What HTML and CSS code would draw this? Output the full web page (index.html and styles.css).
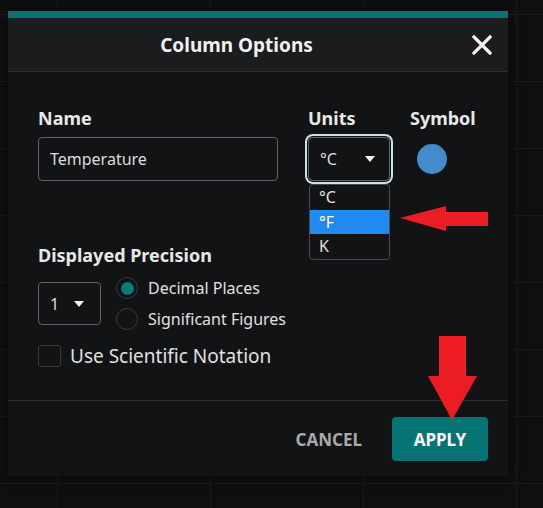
FILE: index.html
```html
<!DOCTYPE html>
<html>
<head>
<meta charset="utf-8">
<link rel="stylesheet" href="styles.css">
</head>
<body>
<div class="dialog">
  <div class="header">
    <div class="title">Column Options</div>
    <svg class="close" width="20" height="20" viewBox="0 0 20 20"><path d="M2 2 L18 18 M18 2 L2 18" stroke="#f2f2f2" stroke-width="3.2" stroke-linecap="square"/></svg>
  </div>
  <div class="body">
    <div class="row1">
      <div class="col name-col">
        <div class="label">Name</div>
        <div class="input">Temperature</div>
      </div>
      <div class="col units-col">
        <div class="label">Units</div>
        <div class="select focused">
          <span>°C</span>
          <span class="caret"></span>
          <div class="menu">
            <div class="opt">°C</div>
            <div class="opt sel">°F</div>
            <div class="opt">K</div>
          </div>
        </div>
      </div>
      <div class="col symbol-col">
        <div class="label">Symbol</div>
        <div class="swatch-wrap"><span class="swatch"></span></div>
      </div>
    </div>
    <div class="label prec-label">Displayed Precision</div>
    <div class="row2">
      <div class="select small"><span>1</span><span class="caret"></span></div>
      <div class="radios">
        <div class="radio-row"><span class="radio on"></span><span>Decimal Places</span></div>
        <div class="radio-row"><span class="radio"></span><span>Significant Figures</span></div>
      </div>
    </div>
    <div class="check-row"><span class="check"></span><span>Use Scientific Notation</span></div>
  </div>
  <div class="footer">
    <span class="cancel">CANCEL</span>
    <span class="apply">APPLY</span>
  </div>
  <svg class="arrow-left" width="90" height="28" viewBox="0 0 90 28"><path d="M0 12 L46 0 L46 6 L88 6 L88 20 L46 20 L46 25 Z" fill="#ec1c24"/></svg>
  <svg class="arrow-down" width="50" height="84" viewBox="0 0 50 84"><path d="M11 0 L38 0 L38 40 L49 40 L24 84 L0 40 L11 40 Z" fill="#ec1c24"/></svg>
</div>
</body>
</html>
```
FILE: styles.css
```css
html, body { margin: 0; padding: 0; }
body {
  width: 543px;
  height: 508px;
  overflow: hidden;
  background-color: #0e0f11;
  background-image:
    linear-gradient(to right, #1a1b1d 1px, transparent 1px),
    linear-gradient(to bottom, #1a1b1d 1px, transparent 1px);
  background-size: 153px 67px;
  background-position: 57px 14px;
  font-family: "Noto Sans", "Open Sans", sans-serif;
  color: #e2e2e2;
}
.dialog {
  position: relative;
  margin: 11px 0 0 8px;
  width: 500px;
  border-top: 7px solid #077272;
  background: #121315;
  box-shadow: 0 0 12px rgba(0,0,0,0.5);
}
.header {
  height: 53px;
  background: #1b1c1e;
  border-bottom: 1px solid #2e2f31;
  display: flex;
  align-items: center;
  gap: 7px;
}
.title {
  flex: 1;
  text-align: center;
  font-weight: 700;
  font-size: 19px;
  color: #f0f0f0;
}
.close { margin-right: 16px; }
.body {
  padding: 34px 30px 0 30px;
  height: 329px;
  box-sizing: border-box;
  border-bottom: 1px solid #2e2f31;
}
.label {
  font-weight: 700;
  font-size: 18px;
  line-height: 24px;
  color: #e8e8e8;
}
.row1 { display: flex; }
.col { display: flex; flex-direction: column; gap: 7px; }
.name-col { width: 240px; margin-right: 30px; }
.units-col { width: 82px; margin-right: 20px; }
.input {
  height: 44px;
  box-sizing: border-box;
  border: 1px solid #606164;
  border-radius: 4px;
  padding-left: 11px;
  display: flex;
  align-items: center;
  font-size: 16px;
  color: #dcdcdc;
}
.select {
  position: relative;
  height: 44px;
  box-sizing: border-box;
  border: 1px solid #606164;
  border-radius: 4px;
  display: flex;
  align-items: center;
  justify-content: space-between;
  padding: 0 14px 0 11px;
  font-size: 16px;
  color: #dcdcdc;
}
.select.focused {
  box-shadow: 0 0 0 1px #141517, 0 0 0 3px #c8e4e4;
  border-radius: 5px;
}
.caret {
  width: 0; height: 0;
  border-left: 5.5px solid transparent;
  border-right: 5.5px solid transparent;
  border-top: 6px solid #f2f2f2;
}
.menu {
  position: absolute;
  left: 0;
  top: 46px;
  width: 81px;
  box-sizing: border-box;
  border: 1px solid #48494c;
  border-radius: 4px;
  background: #121315;
  overflow: hidden;
  z-index: 2;
}
.opt {
  height: 24.5px;
  line-height: 24.5px;
  padding-left: 9px;
  font-size: 16px;
  color: #e0e0e0;
}
.opt.sel { background: #1f8bf0; color: #fff; }
.swatch-wrap { height: 44px; display: flex; align-items: center; padding-left: 7px; }
.swatch { width: 30px; height: 30px; border-radius: 50%; background: #438bcd; }
.prec-label { margin-top: 62px; }
.row2 { display: flex; align-items: flex-start; margin-top: 15px; height: 43px; }
.select.small { width: 63px; height: 43px; padding: 0 16px 0 11px; }
.radios { margin-left: 15px; margin-top: -5px; display: flex; flex-direction: column; gap: 9px; }
.radio-row { display: flex; align-items: center; gap: 10px; font-size: 16px; color: #e0e0e0; height: 22px; }
.radio {
  width: 22px; height: 22px; box-sizing: border-box;
  border: 1.5px solid #38393b; border-radius: 50%;
  display: flex; align-items: center; justify-content: center;
}
.radio.on::after { content: ""; width: 13px; height: 13px; border-radius: 50%; background: #0a7b7b; }
.check-row { display: flex; align-items: center; gap: 9px; margin-top: 20px; height: 22px; font-size: 19px; color: #e0e0e0; }
.check { width: 23px; height: 22px; box-sizing: border-box; border: 1.5px solid #38393b; border-radius: 3px; }
.footer {
  height: 75px;
  box-sizing: border-box;
  padding: 16px 20px 15px 0;
  display: flex;
  justify-content: flex-end;
  align-items: center;
  gap: 30px;
}
.cancel { font-weight: 700; font-size: 17px; color: #a9a9a9; }
.apply {
  width: 96px; height: 44px;
  background: #077474;
  border-radius: 4px;
  display: flex; align-items: center; justify-content: center;
  font-weight: 700; font-size: 17px; color: #fff;
}
.arrow-left { position: absolute; left: 392px; top: 188px; }
.arrow-down { position: absolute; left: 420px; top: 318px; }
```
